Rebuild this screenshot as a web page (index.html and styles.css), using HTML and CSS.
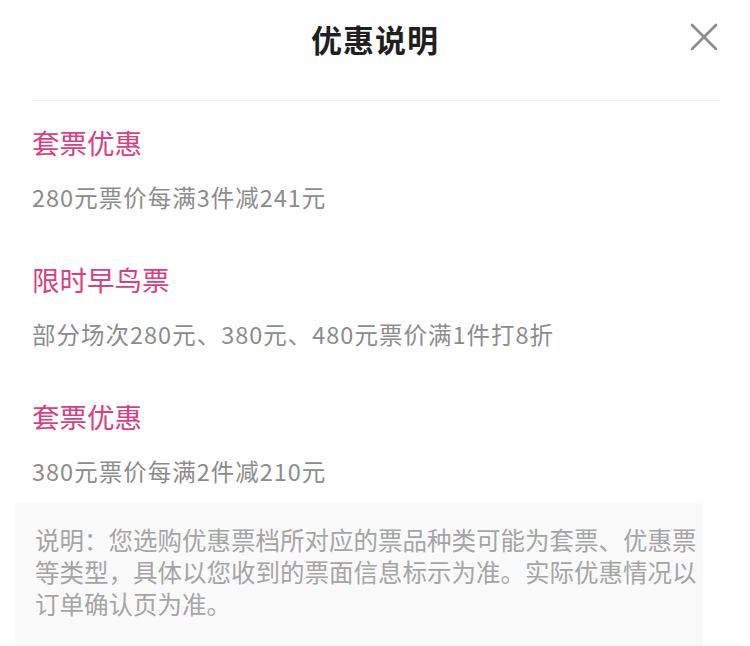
FILE: index.html
```html
<!DOCTYPE html>
<html lang="zh-CN">
<head>
<meta charset="UTF-8">
<meta name="viewport" content="width=device-width, initial-scale=1.0">
<title>优惠说明</title>
<link rel="stylesheet" href="styles.css">
</head>
<body>
    <div class="sheet">
        <div class="header">
            <h2 class="title">优惠说明</h2>
            <span class="close">
                <svg width="28" height="28" viewBox="0 0 28 28">
                    <path d="M2 2 L26 26 M26 2 L2 26" stroke="#8c8c8c" stroke-width="2.6" stroke-linecap="round" fill="none"/>
                </svg>
            </span>
        </div>
        <div class="divider"></div>
        <div class="offers">
            <div class="offer">
                <h3 class="offer-name">套票优惠</h3>
                <p class="offer-desc">280元票价每满3件减241元</p>
            </div>
            <div class="offer">
                <h3 class="offer-name">限时早鸟票</h3>
                <p class="offer-desc">部分场次280元、380元、480元票价满1件打8折</p>
            </div>
            <div class="offer">
                <h3 class="offer-name">套票优惠</h3>
                <p class="offer-desc">380元票价每满2件减210元</p>
            </div>
        </div>
        <div class="note">
            说明：您选购优惠票档所对应的票品种类可能为套票、优惠票等类型，具体以您收到的票面信息标示为准。实际优惠情况以订单确认页为准。
        </div>
    </div>
</body>
</html>
```

FILE: styles.css
```css
body {
    margin: 0;
    padding: 0;
    background-color: #ffffff;
    font-family: "Noto Sans CJK SC", "Noto Sans", sans-serif;
    overflow: hidden;
}
.sheet {
    width: 750px;
    height: 646px;
}
.header {
    position: relative;
    height: 76px;
    display: flex;
    justify-content: center;
    align-items: center;
}
.title {
    margin: 0;
    font-size: 31px;
    font-weight: 700;
    color: #1f1f1f;
    letter-spacing: 1px;
}
.close {
    position: absolute;
    right: 32px;
    top: 23px;
    width: 28px;
    height: 28px;
}
.divider {
    height: 1px;
    margin: 24px 30px 0 32px;
    background-color: #ececec;
}
.offers {
    padding: 0 32px;
}
.offer {
    padding-top: 21px;
}
.offer + .offer {
    padding-top: 46px;
}
.offer-name {
    margin: 0;
    font-size: 27.5px;
    font-weight: 400;
    line-height: 40px;
    color: #d9407f;
}
.offer-desc {
    margin: 19px 0 0 0;
    font-size: 23.5px;
    line-height: 32px;
    letter-spacing: 1px;
    color: #8c8c8c;
}
.note {
    margin: 15px 47px 0 15px;
    padding: 22px 4px 30px 20px;
    min-height: 120px;
    background-color: #fafafb;
    font-size: 24.5px;
    line-height: 32px;
    color: #a5a5a5;
}
```
